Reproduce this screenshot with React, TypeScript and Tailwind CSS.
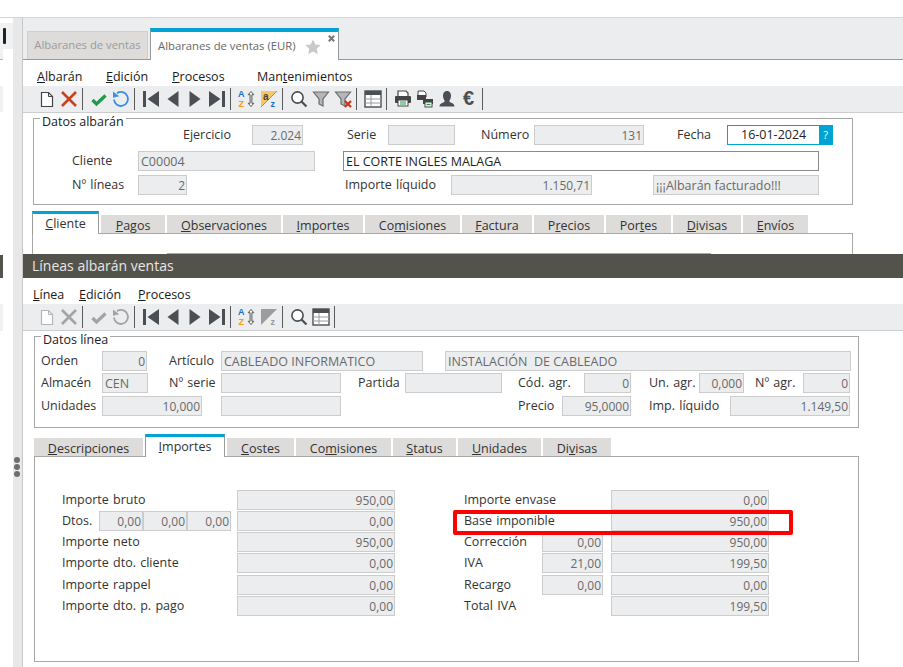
import type { ReactNode } from 'react';

const D = '#4b4e52';

function Ico({ children }: { children: ReactNode }) {
  return (
    <svg width="22" height="22" viewBox="0 0 22 22" className="shrink-0">
      {children}
    </svg>
  );
}

function Sep() {
  return <span className="ml-[2px] mr-[5px] h-[22px] w-px shrink-0 bg-[#5a5a5a]" />;
}

const NewDoc = ({ off }: { off?: boolean }) => (
  <Ico>
    <path d="M5.5 4.5h7l4 4v10h-11z" fill="#fff" stroke={off ? '#b5b5b5' : '#444'} strokeWidth="1.2" />
    <path d="M12.5 4.5v4h4" fill="none" stroke={off ? '#b5b5b5' : '#444'} strokeWidth="1" />
  </Ico>
);
const Cross = ({ off }: { off?: boolean }) => (
  <Ico>
    <path d="M4 4l14 14M18 4L4 18" stroke={off ? '#a3a3a3' : '#c9421d'} strokeWidth="2.6" fill="none" />
  </Ico>
);
const Check = ({ off }: { off?: boolean }) => (
  <Ico>
    <path d="M4.5 12l4 4 9-8.5" stroke={off ? '#a3a3a3' : '#1f9a4a'} strokeWidth="3.2" fill="none" />
  </Ico>
);
const Undo = ({ off }: { off?: boolean }) => (
  <Ico>
    <path d="M7 5.2A7 7 0 1 1 4 11.5" stroke={off ? '#a3a3a3' : '#3a8ee6'} strokeWidth="1.8" fill="none" />
    <path d="M3 3.5v6.2l6.2-1.4z" fill={off ? '#a3a3a3' : '#3a8ee6'} />
  </Ico>
);
const First = () => (
  <Ico>
    <rect x="3" y="3" width="3" height="16" fill={D} />
    <path d="M19 3v16L7.5 11z" fill={D} />
  </Ico>
);
const Prev = () => (
  <Ico>
    <path d="M16.5 3v16L5.5 11z" fill={D} />
  </Ico>
);
const Next = () => (
  <Ico>
    <path d="M5.5 3v16l11-8z" fill={D} />
  </Ico>
);
const Last = () => (
  <Ico>
    <path d="M3 3v16l11.5-8z" fill={D} />
    <rect x="16" y="3" width="3" height="16" fill={D} />
  </Ico>
);
const SortAz = () => (
  <Ico>
    <text x="2" y="9" fontSize="9" fontWeight="700" fontFamily="Liberation Sans" fill="#1a6fc4">A</text>
    <text x="2.5" y="19" fontSize="9" fontWeight="700" fontFamily="Liberation Sans" fill="#f29a16">Z</text>
    <path d="M15 3.5l-2.8 3.2h1.9v8.6h-1.900l2.800 3.200 2.800-3.200h-1.900V6.700h1.900z" fill="#fff" stroke="#555" strokeWidth="1" />
  </Ico>
);
const SortAz2 = ({ off }: { off?: boolean }) => (
  <Ico>
    <path d="M3 3h16L3 19z" fill={off ? '#9c9c9c' : '#f7c766'} />
    {!off && <path d="M19 3L3 19" stroke="#e85ca0" strokeWidth="1" />}
    {!off && <text x="5" y="12" fontSize="10" fontWeight="700" fontFamily="Liberation Sans" fill="#444">a</text>}
    <text x="12.5" y="19" fontSize="9" fontWeight="700" fontFamily="Liberation Sans" fill={off ? '#999' : '#1a6fc4'}>z</text>
  </Ico>
);
const Search = () => (
  <Ico>
    <circle cx="9.5" cy="9.5" r="5.6" fill="#fff" stroke={D} strokeWidth="1.6" />
    <path d="M13.5 13.5l5 5" stroke={D} strokeWidth="2.2" />
  </Ico>
);
const Funnel = () => <path d="M3.5 4h15l-5.500 7v7l-4-2v-5z" fill="#b4b6b8" stroke="#6a6d70" strokeWidth="1.2" />;
const Filter = () => (
  <Ico>
    <Funnel />
  </Ico>
);
const FilterX = () => (
  <Ico>
    <Funnel />
    <path d="M13 13l6 6M19 13l-6 6" stroke="#c9341a" strokeWidth="2.2" />
  </Ico>
);
const Grid = () => (
  <Ico>
    <rect x="3" y="3" width="16" height="16" fill="#fff" stroke={D} strokeWidth="1.4" />
    <rect x="3" y="3" width="16" height="4" fill={D} />
    <path d="M3 11h16M3 15h16M9 7v12" stroke="#9a9a9a" strokeWidth="1" />
  </Ico>
);
const Printer = () => (
  <Ico>
    <path d="M6 3h8l2 2v4H6z" fill="#fff" stroke="#444" strokeWidth="1.2" />
    <rect x="3" y="8" width="16" height="7" rx="1" fill="#444" />
    <rect x="6" y="12" width="10" height="6" fill="#fff" stroke="#444" />
    <path d="M8 14h6M8 16h6" stroke="#1f9a4a" strokeWidth="1.2" />
  </Ico>
);
const Printer2 = () => (
  <Ico>
    <path d="M4 3h6l2 2v4H4z" fill="#fff" stroke="#444" />
    <rect x="3" y="7" width="9" height="5" fill="#444" />
    <rect x="9" y="11" width="10" height="5" fill="#444" />
    <rect x="11" y="14" width="7" height="5" fill="#fff" stroke="#444" />
    <path d="M12.5 16.5h4" stroke="#1f9a4a" strokeWidth="1.4" />
  </Ico>
);
const User = () => (
  <Ico>
    <path d="M11 3c3 0 4 2.500 4 5 0 2-1 3.500-1.500 4.500v1.500c2 1 5 1.500 5 4.500H3.500c0-3 3-3.500 5-4.500v-1.500C8 11.500 7 10 7 8c0-2.500 1-5 4-5z" fill={D} />
  </Ico>
);
const Euro = () => (
  <Ico>
    <text x="5" y="17" fontSize="20" fontWeight="700" fontFamily="Liberation Sans" fill={D}>€</text>
  </Ico>
);

function Toolbar({ children }: { children: ReactNode }) {
  return (
    <div className="flex h-[27px] items-center border-b border-[#cccccc] bg-[#ecedee] pb-px pl-[13px]">{children}</div>
  );
}

function Menu({ items }: { items: [ReactNode, string][] }) {
  return (
    <div className="flex h-[26px] items-center pt-[8px] text-[12.500px] text-[#1a1a1a]">
      {items.map(([label, w], i) => (
        <span key={i} className={`shrink-0 ${w}`}>
          {label}
        </span>
      ))}
    </div>
  );
}

function Field({
  w,
  value,
  left,
  white,
}: {
  w: string;
  value?: string;
  left?: boolean;
  white?: boolean;
}) {
  const tone = white ? 'border-[#8a8a8a] bg-white text-[#222]' : 'border-[#cccccc] bg-[#ecedee] text-[#6a6a6a]';
  return (
    <span
      className={`flex h-[20px] shrink-0 items-center overflow-hidden whitespace-pre border ${w} ${tone} ${
        left ? 'justify-start pl-[2px] pt-[2px] text-[12.500px]' : 'justify-end pr-px pt-px text-[12px]'
      }`}
    >
      {value}
    </span>
  );
}

function Lbl({ w, children }: { w: string; children: ReactNode }) {
  return (
    <span className={`shrink-0 whitespace-nowrap text-[12.500px] text-[#333] [word-spacing:1px] ${w}`}>{children}</span>
  );
}

function Row({ className, children }: { className?: string; children: ReactNode }) {
  return <div className={`flex h-[20px] items-center ${className ?? ''}`}>{children}</div>;
}

function Group({ title, className, children }: { title: string; className: string; children: ReactNode }) {
  return (
    <div className={`relative border border-[#a8a8a8] ${className}`}>
      <span className="absolute left-[6px] top-[-6px] bg-white px-[2px] text-[12.500px] leading-[18px] text-[#222]">
        {title}
      </span>
      {children}
    </div>
  );
}

function Tab({ w, active, children }: { w: string; active?: boolean; children: ReactNode }) {
  if (active) {
    return (
      <div
        className={`relative z-10 -mb-px flex shrink-0 justify-center self-stretch border-x border-x-[#9a9a9a] border-t-[3px] border-t-[#00a3d3] bg-white pt-[1px] text-[12.500px] text-[#333] ${w} mr-[2px]`}
      >
        {children}
      </div>
    );
  }
  return (
    <div
      className={`mr-[2px] flex h-[18px] shrink-0 items-end justify-center bg-[#dddcda] text-[12.500px] leading-[14px] text-[#333] ${w}`}
    >
      {children}
    </div>
  );
}

function LeftStrip() {
  return (
    <div className="relative h-full w-[13px] shrink-0">
      <div className="h-[5px]" />
      <div className="flex h-[26px] bg-[#f0f1f2] pl-[3px] pt-[5px]">
        <span className="h-[16px] w-[3px] rounded-[1px] bg-[#222]" />
      </div>
      <div className="h-[10px] w-[3px] bg-[#f0f1f2]" />
      <div className="h-px w-[3px] bg-[#b5b5b5]" />
      <div className="h-[26px]" />
      <div className="h-[26px] w-[3px] bg-[#f0f1f2]" />
      <div className="h-[143px]" />
      <div className="h-[23px] w-[3px] bg-[#53534b]" />
      <div className="h-[26px]" />
      <div className="h-[27px] w-[3px] bg-[#f0f1f2]" />
    </div>
  );
}

function Sash() {
  return (
    <div className="flex h-full w-[10px] shrink-0 flex-col items-center border-r border-[#c8c8c8] bg-[#e8e8e8] pr-px">
      <div className="h-[439px]" />
      <span className="h-[6px] w-[6px] rounded-full bg-[#6e6e6e]" />
      <span className="mt-px h-[6px] w-[6px] rounded-full bg-[#6e6e6e]" />
      <span className="mt-px h-[6px] w-[6px] rounded-full bg-[#6e6e6e]" />
    </div>
  );
}

function Header() {
  return (
    <>
      <div className="flex h-[42px] items-end border-b border-[#999] bg-[#ecedee] pl-[4px]">
        <div className="flex h-[28px] w-[121px] items-center justify-center border border-b-0 border-[#cfcfcf] bg-[#dddcda] text-[11.300px] text-[#9b9b9b]">
          Albaranes de ventas
        </div>
        <div className="relative z-10 -mb-px ml-[2px] flex h-[32px] w-[189px] items-center border-x border-x-[#9a9a9a] border-t-[4px] border-t-[#00a3d3] bg-white pl-[7px] text-[11.300px] text-[#666]">
          Albaranes de ventas (EUR)
          <svg width="16" height="16" viewBox="0 0 16 16" className="ml-[9px] mt-[2px]">
            <path d="M8 .5l2.300 5 5.400.6-4 3.700 1.100 5.400L8 12.500l-4.800 2.700 1.100-5.400-4-3.700 5.400-.6z" fill="#c9c9c9" />
          </svg>
          <svg width="7" height="7" viewBox="0 0 7 7" className="absolute right-[3px] top-[3px]">
            <path d="M.8.8l5.400 5.400M6.200.8L.8 6.200" stroke="#777" strokeWidth="2" />
          </svg>
        </div>
      </div>
      <Menu
        items={[
          [<><u>A</u>lbarán</>, 'ml-[14px] w-[69px]'],
          [<><u>E</u>dición</>, 'w-[66px]'],
          [<><u>P</u>rocesos</>, 'w-[85px]'],
          [<>Man<u>t</u>enimientos</>, ''],
        ]}
      />
      <Toolbar>
        <NewDoc /><Cross /><Sep /><Check /><Undo /><Sep /><First /><Prev /><Next /><Last /><Sep />
        <SortAz /><SortAz2 /><Sep /><Search /><Filter /><FilterX /><Sep /><Grid /><Sep />
        <Printer /><Printer2 /><User /><Euro /><Sep />
      </Toolbar>
    </>
  );
}

function DatosAlbaran() {
  return (
    <Group title="Datos albarán" className="ml-[10px] mt-[5px] h-[87px] w-[820px]">
      <Row className="mt-[6px] pl-[149px]">
        <Lbl w="w-[69px]">Ejercicio</Lbl>
        <Field w="w-[51px]" value="2.024" />
        <Lbl w="ml-[44px] w-[41px]">Serie</Lbl>
        <Field w="w-[67px]" />
        <Lbl w="ml-[26px] w-[53px]">Número</Lbl>
        <Field w="w-[110px]" value="131" />
        <Lbl w="ml-[33px] w-[50px]">Fecha</Lbl>
        <span className="flex h-[20px] w-[106px] shrink-0 items-center justify-between border border-[#00a3d3] bg-white pl-[13px] text-[12.500px] text-[#222]">
          <span className="pt-px">16-01-2024</span>
          <span className="flex h-full w-[13px] items-center justify-center bg-[#00a3d3] text-[11px] text-white">?</span>
        </span>
      </Row>
      <Row className="mt-[6px] pl-[38px]">
        <Lbl w="w-[66px]">Cliente</Lbl>
        <Field w="w-[177px]" value="C00004" left />
        <span className="w-[28px]" />
        <Field w="w-[476px]" value="EL CORTE INGLES MALAGA" left white />
      </Row>
      <Row className="mt-[4px] pl-[38px]">
        <Lbl w="w-[66px]">Nº líneas</Lbl>
        <Field w="w-[49px]" value="2" />
        <Lbl w="ml-[158px] w-[106px]">Importe líquido</Lbl>
        <Field w="w-[141px]" value="1.150,71" />
        <span className="w-[61px]" />
        <Field w="w-[166px]" value="¡¡¡Albarán facturado!!!" left />
      </Row>
    </Group>
  );
}

function ClienteTabs() {
  return (
    <>
      <div className="ml-[9px] mt-[6px] flex h-[22px] items-end">
        <Tab w="w-[67px]" active><span><u>C</u>liente</span></Tab>
        <Tab w="w-[64px]"><span><u>P</u>agos</span></Tab>
        <Tab w="w-[114px]"><span><u>O</u>bservaciones</span></Tab>
        <Tab w="w-[80px]"><span><u>I</u>mportes</span></Tab>
        <Tab w="w-[95px]"><span>Co<u>m</u>isiones</span></Tab>
        <Tab w="w-[70px]"><span><u>F</u>actura</span></Tab>
        <Tab w="w-[70px]"><span>P<u>r</u>ecios</span></Tab>
        <Tab w="w-[65px]"><span>Por<u>t</u>es</span></Tab>
        <Tab w="w-[68px]"><span><u>D</u>ivisas</span></Tab>
        <Tab w="w-[65px]"><span><u>E</u>nvíos</span></Tab>
      </div>
      <div className="ml-[9px] flex h-[21px] w-[821px] items-end border-x border-t border-[#a8a8a8]">
        <div className="ml-[134px] h-px w-[544px] bg-[#a8a8a8]" />
      </div>
    </>
  );
}

function DatosLinea() {
  return (
    <Group title="Datos línea" className="ml-[11px] mt-[5px] h-[92px] w-[825px]">
      <Row className="mt-[14px] pl-[6px]">
        <Lbl w="w-[61px]">Orden</Lbl>
        <Field w="w-[45px]" value="0" />
        <Lbl w="ml-[22px] w-[52px]">Artículo</Lbl>
        <Field w="w-[202px]" value="CABLEADO INFORMATICO" left />
        <span className="w-[22px]" />
        <Field w="w-[406px]" value="INSTALACIÓN  DE CABLEADO" left />
      </Row>
      <Row className="mt-[2px] pl-[6px]">
        <Lbl w="w-[61px]">Almacén</Lbl>
        <Field w="w-[46px]" value="CEN" left />
        <Lbl w="ml-[21px] w-[52px]">Nº serie</Lbl>
        <Field w="w-[120px]" />
        <Lbl w="ml-[17px] w-[47px]">Partida</Lbl>
        <Field w="w-[97px]" />
        <Lbl w="ml-[16px] w-[66px]">Cód. agr.</Lbl>
        <Field w="w-[47px]" value="0" />
        <Lbl w="ml-[18px] w-[50px]">Un. agr.</Lbl>
        <Field w="w-[45px]" value="0,000" />
        <Lbl w="ml-[11px] w-[48px]">Nº agr.</Lbl>
        <Field w="w-[47px]" value="0" />
      </Row>
      <Row className="mt-[3px] pl-[6px]">
        <Lbl w="w-[61px]">Unidades</Lbl>
        <Field w="w-[100px]" value="10,000" />
        <span className="w-[19px]" />
        <Field w="w-[120px]" />
        <Lbl w="ml-[177px] w-[44px]">Precio</Lbl>
        <Field w="w-[69px]" value="95,0000" />
        <Lbl w="ml-[18px] w-[81px]">Imp. líquido</Lbl>
        <Field w="w-[120px]" value="1.149,50" />
      </Row>
    </Group>
  );
}

function Importes() {
  return (
    <div className="relative ml-[11px] flex h-[206px] w-[825px] border border-[#a8a8a8] pl-[27px] pt-[33px]">
      <div className="flex w-[333px] flex-col">
        <Row>
          <Lbl w="w-[175px]">Importe bruto</Lbl>
          <Field w="w-[158px]" value="950,00" />
        </Row>
        <Row className="mt-px">
          <Lbl w="w-[37px]">Dtos.</Lbl>
          <Field w="w-[44px]" value="0,00" />
          <Field w="w-[44px]" value="0,00" />
          <Field w="w-[44px]" value="0,00" />
          <span className="w-[6px]" />
          <Field w="w-[158px]" value="0,00" />
        </Row>
        <Row className="mt-px">
          <Lbl w="w-[175px]">Importe neto</Lbl>
          <Field w="w-[158px]" value="950,00" />
        </Row>
        <Row className="mt-px">
          <Lbl w="w-[175px]">Importe dto. cliente</Lbl>
          <Field w="w-[158px]" value="0,00" />
        </Row>
        <Row className="mt-[2px]">
          <Lbl w="w-[175px]">Importe rappel</Lbl>
          <Field w="w-[158px]" value="0,00" />
        </Row>
        <Row className="mt-px">
          <Lbl w="w-[175px]">Importe dto. p. pago</Lbl>
          <Field w="w-[158px]" value="0,00" />
        </Row>
      </div>
      <div className="ml-[69px] flex w-[305px] flex-col">
        <Row>
          <Lbl w="w-[147px]">Importe envase</Lbl>
          <Field w="w-[158px]" value="0,00" />
        </Row>
        <Row className="mt-px">
          <Lbl w="w-[147px]">Base imponible</Lbl>
          <Field w="w-[158px]" value="950,00" />
        </Row>
        <Row className="mt-px">
          <Lbl w="w-[78px]">Corrección</Lbl>
          <Field w="w-[61px]" value="0,00" />
          <span className="w-[8px]" />
          <Field w="w-[158px]" value="950,00" />
        </Row>
        <Row className="mt-px">
          <Lbl w="w-[78px]">IVA</Lbl>
          <Field w="w-[61px]" value="21,00" />
          <span className="w-[8px]" />
          <Field w="w-[158px]" value="199,50" />
        </Row>
        <Row className="mt-[2px]">
          <Lbl w="w-[78px]">Recargo</Lbl>
          <Field w="w-[61px]" value="0,00" />
          <span className="w-[8px]" />
          <Field w="w-[158px]" value="0,00" />
        </Row>
        <Row className="mt-px">
          <Lbl w="w-[147px]">Total IVA</Lbl>
          <Field w="w-[158px]" value="199,50" />
        </Row>
      </div>
      {/* recuadro rojo de la captura */}
      <div className="absolute left-[418px] top-[53px] h-[25px] w-[340px] rounded-[2px] border-4 border-[#ff0000]" />
    </div>
  );
}

export default function App() {
  return (
    <div
      className="h-[667px] w-[903px] overflow-hidden bg-white"
      style={{ fontFamily: '"Open Sans", "Noto Sans", sans-serif' }}
    >
      <div className="h-[17px]" />
      <div className="flex h-[650px] border-t border-[#d4d4d4]">
        <LeftStrip />
        <Sash />
        <main className="min-w-0 flex-1">
          <Header />
          <DatosAlbaran />
          <ClienteTabs />
          <div className="flex h-[24px] items-center bg-[#53534b] pb-[2px] pl-[9px] text-[14px] text-[#e6e6e6]">
            Líneas albarán ventas
          </div>
          <Menu
            items={[
              [<><u>L</u>ínea</>, 'ml-[10px] w-[46px]'],
              [<><u>E</u>dición</>, 'w-[59px]'],
              [<><u>P</u>rocesos</>, ''],
            ]}
          />
          <Toolbar>
            <NewDoc off /><Cross off /><Sep /><Check off /><Undo off /><Sep /><First /><Prev /><Next /><Last /><Sep />
            <SortAz /><SortAz2 off /><Sep /><Search /><Grid /><Sep />
          </Toolbar>
          <DatosLinea />
          <div className="ml-[11px] mt-[6px] flex h-[22px] items-end">
            <Tab w="w-[109px]"><span><u>D</u>escripciones</span></Tab>
            <Tab w="w-[80px]" active><span><u>I</u>mportes</span></Tab>
            <Tab w="w-[67px]"><span><u>C</u>ostes</span></Tab>
            <Tab w="w-[95px]"><span>Co<u>m</u>isiones</span></Tab>
            <Tab w="w-[63px]"><span><u>S</u>tatus</span></Tab>
            <Tab w="w-[83px]"><span><u>U</u>nidades</span></Tab>
            <Tab w="w-[68px]"><span>Di<u>v</u>isas</span></Tab>
          </div>
          <Importes />
        </main>
      </div>
    </div>
  );
}
